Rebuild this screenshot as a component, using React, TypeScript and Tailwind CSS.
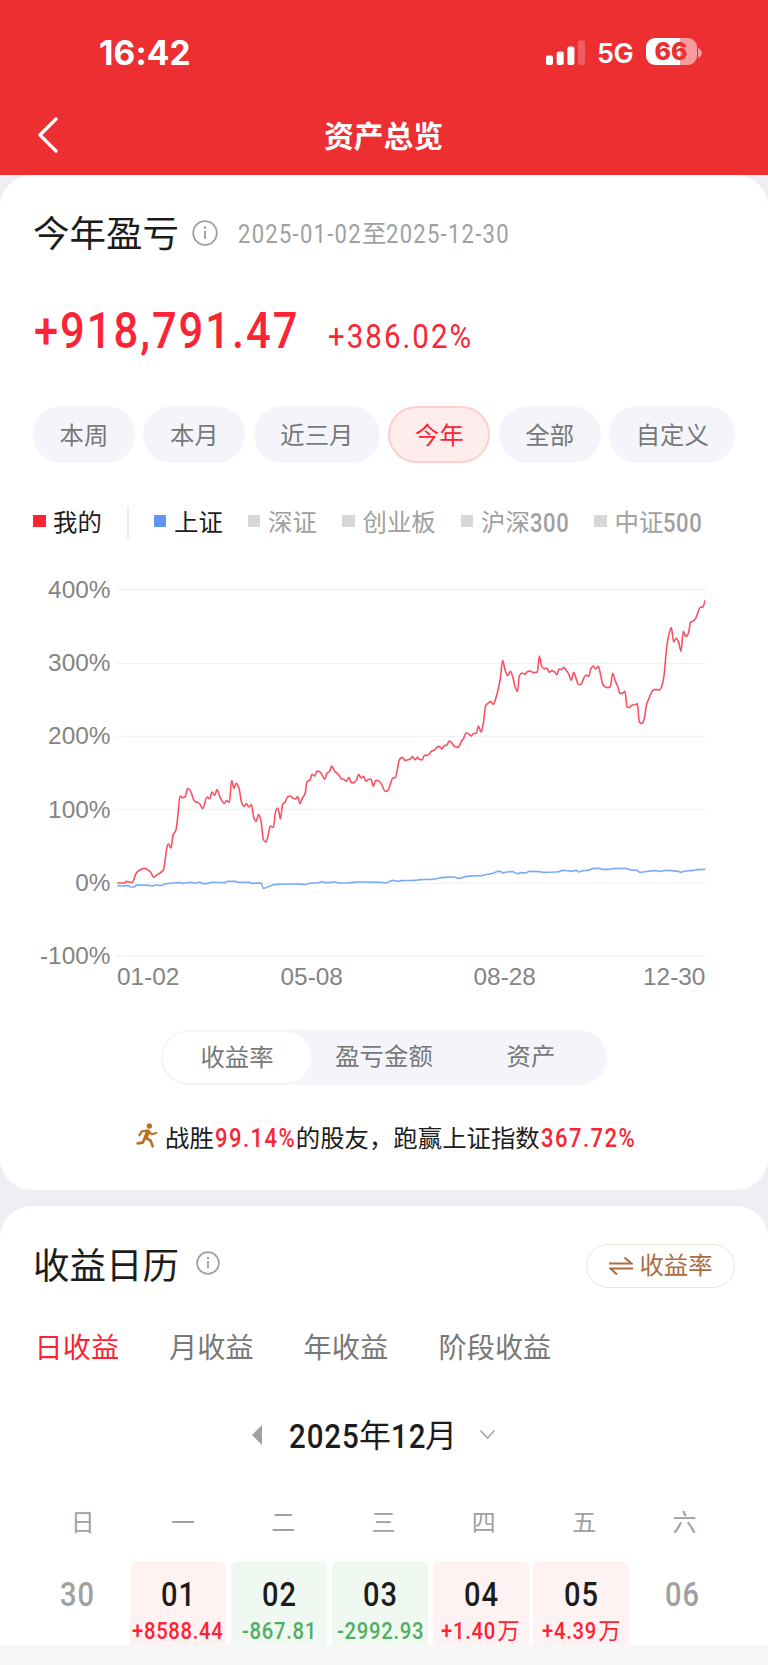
import React from "react";

const FONT = "font-['Roboto','Noto_Sans_CJK_SC',sans-serif]";

const periods = [
  { label: "本周", cls: "w-[102px]" },
  { label: "本月", cls: "w-[102px]" },
  { label: "近三月", cls: "w-[126.5px]" },
  { label: "今年", cls: "w-[102px]", active: true },
  { label: "全部", cls: "w-[102px]" },
  { label: "自定义", cls: "w-[126.5px]" },
];

const legend = [
  { label: "深证", cls: "w-[94.5px]" },
  { label: "创业板", cls: "w-[118.5px]" },
  { label: "沪深", num: "300", cls: "w-[133.5px]" },
  { label: "中证", num: "500", cls: "w-[120px]" },
];

const RED =
  "352,939 373,939 379,934 396,938 409,909 415,903 433,895 443,899 452,907 461,922 470,915 480,909 490,900 503,824 506,822 513,834 519,795 528,779 534,733 540,678 548,683 556,679 563,656 570,661 584,694 594,698 600,703 608,716 621,681 629,686 636,666 644,676 651,659 660,681 673,700 680,692 688,697 695,632 702,655 709,640 717,655 725,698 732,709 739,701 747,711 754,704 761,740 768,754 776,734 783,752 790,808 798,816 805,793 811,768 820,772 827,723 834,714 841,747 848,703 856,695 863,680 871,678 878,684 886,687 893,680 900,701 908,683 915,671 921,635 930,630 936,613 944,618 951,603 959,605 966,614 974,628 981,610 989,604 995,588 1003,602 1017,616 1024,626 1032,628 1039,634 1047,622 1054,638 1061,638 1069,631 1076,613 1083,624 1091,619 1098,634 1105,628 1113,628 1120,649 1127,631 1135,632 1143,640 1156,664 1163,662 1178,625 1186,622 1199,568 1207,562 1215,571 1231,567 1237,560 1245,569 1252,562 1260,569 1267,569 1273,556 1281,556 1288,552 1295,543 1302,541 1310,533 1318,529 1325,537 1332,527 1341,525 1347,513 1354,517 1362,528 1371,532 1377,529 1384,514 1391,505 1398,489 1406,491 1413,498 1420,491 1429,490 1435,468 1443,486 1450,460 1457,407 1464,400 1472,395 1480,403 1488,383 1495,355 1501,325 1508,271 1515,300 1523,317 1531,304 1539,323 1545,350 1553,364 1558,317 1567,309 1575,313 1582,305 1590,303 1601,308 1612,306 1618,258 1625,288 1632,297 1640,294 1648,307 1656,302 1663,305 1671,314 1677,297 1684,299 1691,292 1699,301 1706,312 1714,331 1721,307 1728,325 1736,344 1743,343 1751,325 1758,315 1766,319 1772,298 1780,288 1787,297 1795,289 1802,315 1808,342 1815,350 1824,353 1831,350 1838,310 1846,333 1853,349 1860,370 1868,370 1875,364 1881,411 1889,412 1896,405 1904,405 1912,401 1918,456 1925,461 1932,450 1940,402 1948,383 1956,364 1963,359 1971,359 1979,360 1985,349 1992,317 1999,242 2006,197 2014,173 2021,216 2029,204 2036,217 2043,244 2050,184 2058,200 2065,190 2072,156 2080,153 2087,145 2094,127 2101,112 2109,111 2116,91";
const BLUE =
  "352,946 362,948 385,947 393,951 403,951 409,945 448,946 456,948 468,945 484,947 495,942 518,939 541,938 548,940 572,937 588,939 600,936 608,941 625,940 636,937 675,938 682,934 704,934 715,937 747,937 757,940 783,939 790,955 812,947 830,943 870,942 916,943 934,939 952,939 967,935 978,938 1005,936 1018,939 1050,938 1078,936 1145,937 1158,939 1178,931 1194,934 1204,932 1245,931 1260,929 1298,928 1332,922 1362,921 1375,925 1397,920 1435,917 1443,918 1455,914 1470,912 1480,910 1493,904 1501,904 1508,909 1520,906 1537,905 1552,911 1562,908 1578,909 1587,904 1618,905 1630,907 1670,906 1690,901 1715,904 1728,901 1737,906 1749,902 1764,901 1778,896 1797,895 1807,898 1830,898 1837,896 1876,895 1893,900 1911,901 1919,907 1937,905 1961,902 1980,904 1999,901 2035,904 2043,907 2052,904 2080,901 2092,899 2116,898";

// Rounds each vertex slightly while passing through every sample.
function smooth(points: string) {
  const p = points.split(" ").map((s) => s.split(",").map(Number));
  let d = `M${p[0][0]} ${p[0][1]}`;
  const slope = (i: number) => {
    if (i === 0 || i === p.length - 1) return 0;
    const a = (p[i][1] - p[i - 1][1]) / (p[i][0] - p[i - 1][0]);
    const b = (p[i + 1][1] - p[i][1]) / (p[i + 1][0] - p[i][0]);
    return a * b <= 0 ? 0 : (2 * a * b) / (a + b);
  };
  for (let i = 1; i < p.length; i++) {
    const h = (p[i][0] - p[i - 1][0]) / 3;
    d += `C${p[i - 1][0] + h} ${p[i - 1][1] + h * slope(i - 1)} ${p[i][0] - h} ${p[i][1] - h * slope(i)} ${p[i][0]} ${p[i][1]}`;
  }
  return d;
}

// Narrow figures: the box takes its width from the caller, the digits are condensed in it.
function Num({ children, box, text }: { children: string; box: string; text: string }) {
  return (
    <span className={`inline-block text-left whitespace-nowrap ${box}`}>
      <span className={`inline-block origin-left scale-x-[0.88] ${text}`}>{children}</span>
    </span>
  );
}

function Info({ className }: { className: string }) {
  return (
    <svg viewBox="0 0 26 26" className={className} fill="none" stroke="#a0a0a0">
      <circle cx="13" cy="13" r="11.8" strokeWidth="1.8" />
      <path d="M13 10.8v8" strokeWidth="1.9" />
      <circle cx="13" cy="7.6" r="1.3" fill="#a0a0a0" stroke="none" />
    </svg>
  );
}

function Runner() {
  return (
    <svg width="22" height="25" viewBox="0 0 66 75" className="mr-[7px] mb-[6px]" fill="none" stroke="#b87322" strokeLinecap="round" strokeLinejoin="round">
      <circle cx="40" cy="9" r="8" fill="#b87322" stroke="none" />
      <path d="M36 26L29 44" strokeWidth="13" />
      <path d="M35 23L17 25L10 37M37 24L47 34L61 30" strokeWidth="6.5" />
      <path d="M30 45L44 53L50 70M26 46L20 59L5 61" strokeWidth="8" />
    </svg>
  );
}

function StatusBar() {
  return (
    <div className="flex h-[97px] items-start justify-between pl-[99px] pr-[66px] font-['Inter',sans-serif] text-white">
      <span className="mt-[32.5px] text-[33.5px] leading-[40px] font-bold tracking-[0.1px]">16:42</span>
      <div className="mt-[38px] flex items-center">
        <svg width="39" height="26" viewBox="0 0 39 26" fill="white" className="mb-[2px]">
          <rect x="0" y="16.5" width="7" height="9.5" rx="2" />
          <rect x="10.7" y="12.5" width="7" height="13.5" rx="2" />
          <rect x="21.4" y="7.5" width="7" height="18.5" rx="2" />
          <rect x="32" y="1.5" width="7" height="24.5" rx="2" opacity="0.22" />
        </svg>
        <span className="mt-[1px] ml-[12px] w-[36px] text-[27px] leading-[27px] font-semibold tracking-[-0.6px]">5G</span>
        <div className="mb-[2px] ml-[12.5px] flex h-[27px] w-[51px] items-center justify-center rounded-[9px] bg-[linear-gradient(to_right,white_66%,#f79b9c_66%)] text-[25px] font-extrabold text-[#ed2f32]">
          66
        </div>
        <svg width="4" height="10" viewBox="0 0 4 10" className="ml-[1.5px]">
          <path d="M0 0C5 2 5 8 0 10Z" fill="#f79b9c" />
        </svg>
      </div>
    </div>
  );
}

function Chart() {
  const rows = ["400%", "300%", "200%", "100%", "0%", "-100%"];
  return (
    <div className="mt-[34px] font-['Liberation_Sans',sans-serif] text-[24.4px] text-[#848484]">
      <div className="flex">
        <div className="flex w-[110.5px] flex-col text-right">
          {rows.map((r) => (
            <div key={r} className="h-[73.4px] leading-[29px]">{r}</div>
          ))}
        </div>
        <svg width="592" height="384" viewBox="348 15 1776 1152" className="ml-[5.5px]" fill="none">
          {[59, 280, 499, 718, 940, 1159].map((y) => (
            <path key={y} d={`M348 ${y}H2120`} stroke="#f0f1f9" strokeWidth="4" />
          ))}
          <path d={smooth(BLUE)} stroke="#7daaf7" strokeWidth="4.8" strokeLinejoin="round" />
          <path d={smooth(RED)} stroke="#fb5061" strokeWidth="4.8" strokeLinejoin="round" />
        </svg>
      </div>
      <div className="-mt-[53px] flex h-[30px] pl-[117px] leading-[30px]">
        <span className="w-[163.5px]">01-02</span>
        <span className="w-[193px]">05-08</span>
        <span className="w-[169.5px]">08-28</span>
        <span>12-30</span>
      </div>
    </div>
  );
}

const days = [
  { d: "30", box: "" },
  { d: "01", v: "+8588.44", box: "w-[91px]" },
  { d: "02", v: "-867.81", box: "w-[73px]" },
  { d: "03", v: "-2992.93", box: "w-[86px]" },
  { d: "04", v: "+1.40", unit: "万", box: "w-[56px]" },
  { d: "05", v: "+4.39", unit: "万", box: "w-[56px]" },
  { d: "06", box: "" },
];

export default function App() {
  return (
    <div className={`flex h-[1665px] w-[768px] flex-col overflow-hidden bg-[#efeef5] text-[#1c1c1c] ${FONT}`}>
      <header className="h-[174.5px] shrink-0 bg-[#ed2f32]">
        <StatusBar />
        <div className="flex h-[77px] items-center px-[38px] text-white">
          <svg width="20" height="36" viewBox="0 0 20 36" fill="none" stroke="white" strokeWidth="3.2" strokeLinecap="round" strokeLinejoin="round" className="mb-[2px]">
            <path d="M18 2L2 18L18 34" />
          </svg>
          <h1 className="mt-[3px] mr-[21px] flex-1 text-center text-[29.8px] font-bold">资产总览</h1>
        </div>
      </header>

      <section className="h-[1015px] shrink-0 rounded-[32px] bg-white">
        <div className="flex h-[116px] items-center pl-[33px]">
          <h2 className="mt-[4px] text-[36.5px] leading-[48px]">今年盈亏</h2>
          <Info className="ml-[13px] h-[26px] w-[26px]" />
          <span className="mt-[5px] ml-[20px] flex text-[24.4px] text-[#a0a0a0]">
            <Num box="w-[124px]" text="text-[25px] tracking-[1.45px]">2025-01-02</Num>
            至
            <Num box="w-[124px]" text="text-[25px] tracking-[1.45px]">2025-12-30</Num>
          </span>
        </div>
        <div className="flex h-[86px] items-baseline pl-[34px] text-[#fb2434]">
          <Num box="w-[264px] leading-[80px]" text="text-[49.5px] font-medium tracking-[2.2px]">+918,791.47</Num>
          <Num box="ml-[30px] w-[150px]" text="text-[33.5px] tracking-[2.3px]">+386.02%</Num>
        </div>
        <div className="mt-[29px] flex gap-[8.3px] pl-[33px]">
          {periods.map((p) => (
            <div
              key={p.label}
              className={`${p.cls} flex h-[57px] shrink-0 items-center justify-center rounded-full text-[24.4px] ${
                p.active ? "border-2 border-[#fdd0cd] bg-[#ffeced] text-[#fb2434]" : "bg-[#f4f5fb] text-[#787878]"
              }`}
            >
              <span className="mt-[4px]">{p.label}</span>
            </div>
          ))}
        </div>
        <div className="mt-[42px] flex h-[36px] items-center pl-[33px] text-[24.4px] text-[#a0a0a0]">
          <div className="flex w-[94px] items-center">
            <i className="mb-[3px] h-[12px] w-[12.5px] bg-[#fb2434]" />
            <span className="mt-[2px] ml-[7.5px] text-[#1c1c1c]">我的</span>
          </div>
          <i className="mr-[24.5px] h-[33px] w-[2px] bg-[#ececec]" />
          <div className="flex w-[94px] items-center">
            <i className="mb-[3px] h-[12px] w-[12.5px] bg-[#5e97f3]" />
            <span className="mt-[2px] ml-[8px] text-[#1c1c1c]">上证</span>
          </div>
          {legend.map((l) => (
            <div key={l.label} className={`flex shrink-0 items-center ${l.cls}`}>
              <i className="mb-[3px] h-[12px] w-[12.5px] bg-[#d8d8d8]" />
              <span className="mt-[2px] ml-[8px]">{l.label}</span>
              {l.num && <Num box="mt-[2px] w-[40px]" text="text-[25px] font-medium tracking-[0.7px]">{l.num}</Num>}
            </div>
          ))}
        </div>
        <Chart />
        <div className="mx-auto mt-[38px] flex h-[55px] w-[446px] items-center rounded-full bg-[#f4f5fa] p-[2px] text-center text-[24.4px] text-[#787878]">
          <div className="h-[51px] w-[148px] rounded-full bg-white leading-[51px]">收益率</div>
          <div className="w-[146px]">盈亏金额</div>
          <div className="w-[148px]">资产</div>
        </div>
        <div className="mt-[36px] flex h-[36px] items-center pl-[136px] text-[24.4px]">
          <Runner />
          <span>战胜</span>
          <Num box="ml-px w-[81px] text-[#fb2434]" text="text-[25px] font-medium tracking-[1.7px]">99.14%</Num>
          <span>的股友，跑赢上证指数</span>
          <Num box="ml-px w-[96px] text-[#fb2434]" text="text-[25px] font-medium tracking-[1.7px]">367.72%</Num>
        </div>
      </section>

      <section className="mt-[16px] h-[439px] shrink-0 overflow-hidden rounded-t-[32px] bg-white">
        <div className="flex h-[120px] items-center pl-[33px] pr-[33px]">
          <h2 className="mt-[3px] text-[36.5px] leading-[48px]">收益日历</h2>
          <Info className="mb-[5px] ml-[17px] h-[24px] w-[24px]" />
          <div className="ml-auto flex h-[44px] w-[149px] items-center justify-center rounded-full border-[1.5px] border-[#f3e2d8] text-[24.4px] text-[#b06a40]">
            <svg width="24" height="18" viewBox="0 0 24 18" fill="none" stroke="#b06a40" strokeWidth="2" className="mr-[6px] ml-px">
              <path d="M0 6.5H22.5L15.5 0.5M24 11.5H1.5L8 17.5" />
            </svg>
            <span className="mt-[2px]">收益率</span>
          </div>
        </div>
        <div className="mt-[2px] flex h-[44px] items-center pl-[34.5px] text-[28.2px] text-[#787878]">
          <span className="w-[134.5px] text-[#fb2434]">日收益</span>
          <span className="w-[134.5px]">月收益</span>
          <span className="w-[135px]">年收益</span>
          <span>阶段收益</span>
        </div>
        <div className="mt-[42px] flex h-[44px] items-center pl-[252px]">
          <svg width="10" height="20" viewBox="0 0 10 20" className="mb-[2px]"><path d="M10 0V20L0 10Z" fill="#a0a0a0" /></svg>
          <span className="mt-[4px] ml-[27px] flex text-[32px]">
            <Num box="w-[70px]" text="text-[33.5px] font-medium tracking-[1px]">2025</Num>
            年
            <Num box="w-[34px]" text="text-[33.5px] font-medium tracking-[1px]">12</Num>
            月
          </span>
          <svg width="15" height="9" viewBox="0 0 15 9" fill="none" stroke="#a0a0a0" strokeWidth="1.5" className="mb-[2px] ml-[23px]">
            <path d="M0.5 0.5L7.5 8L14.5 0.5" />
          </svg>
        </div>
        <div className="mt-[47px] flex h-[36px] items-center pl-[32.5px] text-center text-[24px] text-[#a0a0a0]">
          {["日", "一", "二", "三", "四", "五", "六"].map((w) => (
            <span key={w} className="w-[100.3px] shrink-0">{w}</span>
          ))}
        </div>
        <div className="mt-[20px] flex gap-[4.9px] pl-[29px] text-center">
          {days.map((x) => (
            <div
              key={x.d}
              className={`flex h-[110px] w-[96px] shrink-0 flex-col items-center rounded-[7px] pt-[14px] ${
                !x.v ? "text-[#a0a0a0]" : x.v[0] === "+" ? "bg-[#fef2f2]" : "bg-[#f0f8f2]"
              }`}
            >
              <Num box="h-[40px] w-[34px] leading-[40px]" text="text-[33px] font-medium tracking-[1.2px]">{x.d}</Num>
              {x.v && (
                <span className={`mt-[1px] flex text-[22.5px] leading-[30px] whitespace-nowrap ${x.v[0] === "+" ? "text-[#fb2434]" : "text-[#4fae61]"}`}>
                  <Num box={x.box} text="text-[23px] font-medium tracking-[0.8px]">{x.v}</Num>
                  {x.unit}
                </span>
              )}
            </div>
          ))}
        </div>
      </section>
      <div className="flex-1 bg-[#f7f7f7]" />
    </div>
  );
}
